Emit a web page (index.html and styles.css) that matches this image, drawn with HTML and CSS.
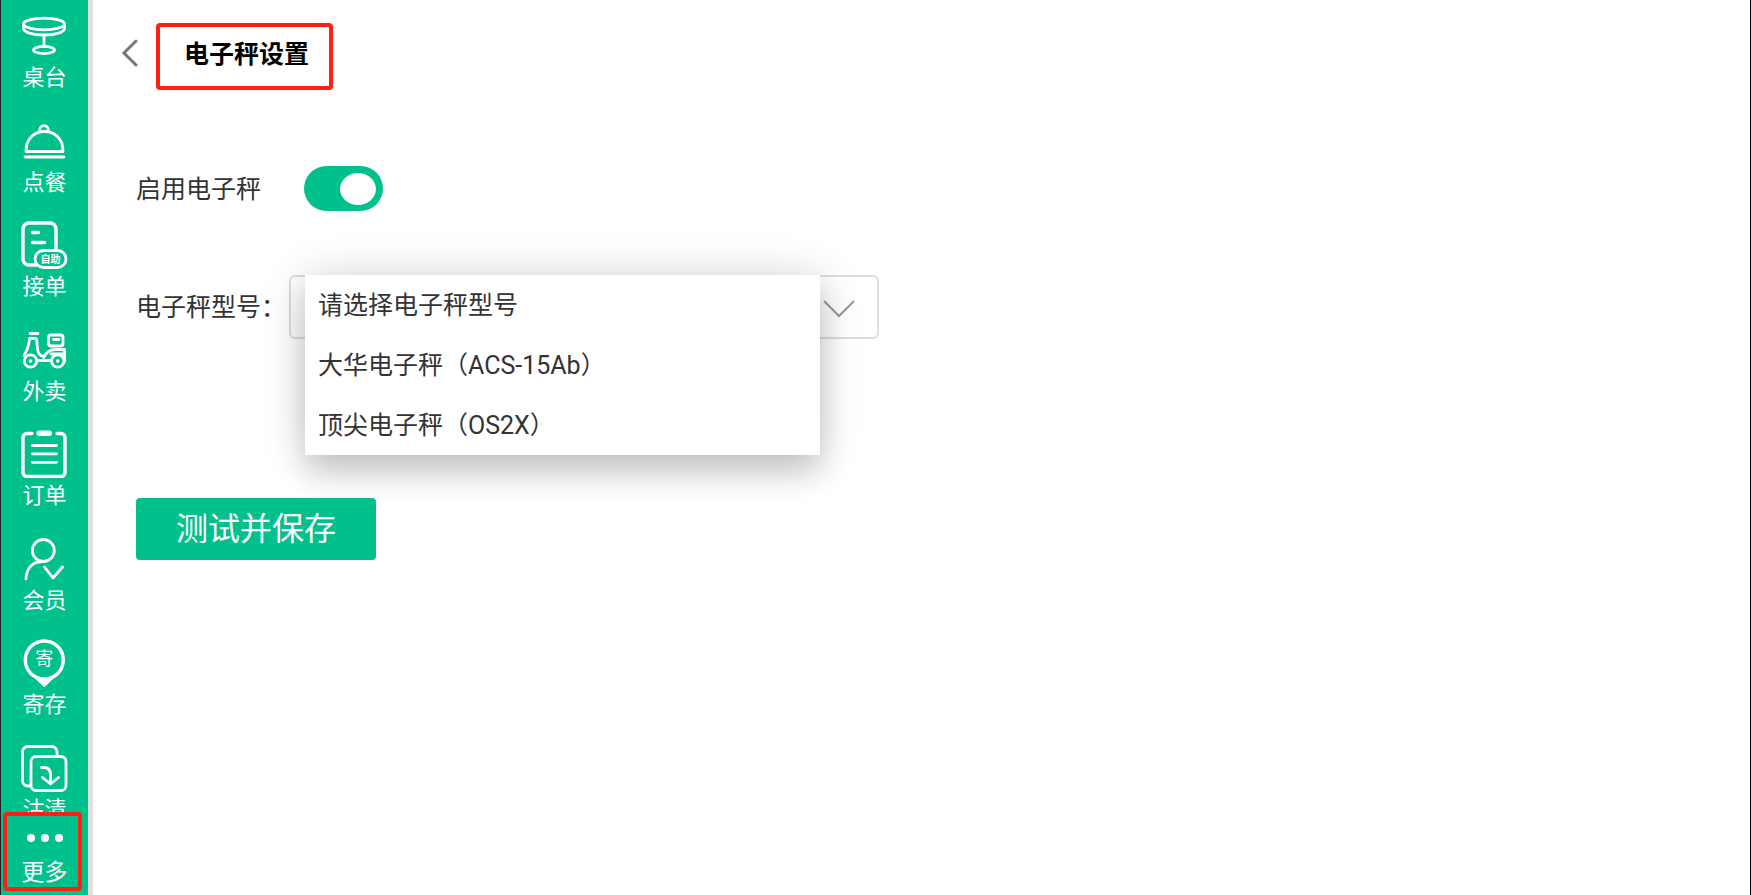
FILE: index.html
```
<!DOCTYPE html>
<html lang="zh-CN">
<head>
    <meta charset="UTF-8">
    <meta name="viewport" content="width=device-width, initial-scale=1.0">
    <title>电子秤设置</title>
    <link rel="stylesheet" href="styles.css">
</head>
<body>
    <div class="app">
        <nav class="sidebar">
            <div class="nav-scroll">
                <div class="nav-list">
                    <a class="nav-item" href="#table">
                        <svg class="nav-icon" viewBox="0 0 48 48">
                            <ellipse cx="24" cy="12" rx="20.5" ry="5.8"/>
                            <path d="M3.500 12v4.500c0 3.500 9 6.500 20.500 6.500s20.500-3 20.500-6.500V12M24 23v11.500"/>
                            <ellipse cx="24" cy="38" rx="10.500" ry="3.600"/>
                        </svg>
                        <span>桌台</span>
                    </a>
                    <a class="nav-item" href="#dishes">
                        <svg class="nav-icon" viewBox="0 0 48 48">
                            <path d="M20 14.500a4.300 4.300 0 1 1 8 0M6 34.500C6 22 14 14.500 24.500 14.500S43 22 43 34.500zM5 40h39"/>
                        </svg>
                        <span>点餐</span>
                    </a>
                    <a class="nav-item" href="#accept">
                        <svg class="nav-icon" viewBox="0 0 48 48">
                            <path class="thick" d="M36 28V8a6 6 0 0 0-6-6H9a6 6 0 0 0-6 6v30a6 6 0 0 0 6 6h7"/>
                            <path class="thick" d="M12.500 11.500h6M12.500 21.500h12"/>
                            <rect x="15" y="29.500" width="31" height="17" rx="8.500"/>
                            <text class="icon-text" x="30.500" y="42" font-size="10">自助</text>
                        </svg>
                        <span>接单</span>
                    </a>
                    <a class="nav-item" href="#takeout">
                        <svg class="nav-icon" viewBox="0 0 48 48">
                            <path d="M10 7.500h8M9.500 12.500h5.500q1.500 0 1.700 2l.8 8c.3 4 2 7.500 6.500 8M9.500 12.500C9 20 7.500 24 4 29.500M17.500 34.500h13.500M23.500 31.500c2.500-5 6-8 12-8h9v12.500"/>
                            <path d="M31 28h13"/>
                            <rect x="28.500" y="9" width="14.500" height="11" rx="2.500"/>
                            <path d="M33.500 13.500h5.500"/>
                            <circle cx="10.500" cy="35" r="6.200"/>
                            <circle cx="37.700" cy="35" r="6.200"/>
                            <circle class="solid" cx="10.500" cy="35" r="1.800"/>
                            <circle class="solid" cx="37.700" cy="35" r="1.800"/>
                        </svg>
                        <span>外卖</span>
                    </a>
                    <a class="nav-item" href="#orders">
                        <svg class="nav-icon" viewBox="0 0 48 48">
                            <path class="thick" d="M12 3.500H7a4 4 0 0 0-4 4v35a4 4 0 0 0 4 4h34a4 4 0 0 0 4-4v-35a4 4 0 0 0-4-4h-4"/>
                            <rect class="solid" x="16.500" y=".5" width="15.500" height="5.500" rx="2.700"/>
                            <path d="M12.500 15.500h24M12.500 23.800h24M12.500 32.300h24"/>
                        </svg>
                        <span>订单</span>
                    </a>
                    <a class="nav-item" href="#members">
                        <svg class="nav-icon" viewBox="0 0 48 48">
                            <circle cx="23.300" cy="15.500" r="11"/>
                            <path d="M6 44C6.500 33.500 12 27 22 26.500M24.500 32L33 43l9.500-11"/>
                        </svg>
                        <span>会员</span>
                    </a>
                    <a class="nav-item" href="#deposit">
                        <svg class="nav-icon" viewBox="0 0 48 48">
                            <circle class="thick" cx="24.300" cy="21" r="19"/>
                            <path class="solid" d="M8.500 33Q24.300 44 40 33L24.300 48.500z"/>
                            <text class="icon-text regular" x="24.300" y="26" font-size="18">寄</text>
                        </svg>
                        <span>寄存</span>
                    </a>
                    <a class="nav-item" href="#soldout">
                        <svg class="nav-icon" viewBox="0 0 48 48">
                            <path d="M10.500 42H8a5.500 5.500 0 0 1-5.500-5.500V8A5.500 5.500 0 0 1 8 2.500h23.500A5.500 5.500 0 0 1 37 8v4.500"/>
                            <rect x="11" y="12.500" width="35" height="34" rx="5"/>
                            <path d="M21.500 23.500h2q7 0 7 7V40M22.500 33.500l8 6.500 8-6.500"/>
                        </svg>
                        <span>沽清</span>
                    </a>
                </div>
            </div>
            <a class="nav-more" href="#more">
                <svg class="more-icon" viewBox="0 0 38 10">
                    <circle cx="5" cy="5" r="4"/>
                    <circle cx="19" cy="5" r="4"/>
                    <circle cx="33" cy="5" r="4"/>
                </svg>
                <span>更多</span>
            </a>
        </nav>

        <main class="content">
            <header class="page-header">
                <button class="back-btn" type="button" aria-label="返回">
                    <svg viewBox="0 0 18 30"><path d="M15 3L3 15l12 12"/></svg>
                </button>
                <h1 class="page-title">电子秤设置</h1>
            </header>

            <form class="settings">
                <div class="row">
                    <label for="enableScale">启用电子秤</label>
                    <input class="switch" type="checkbox" id="enableScale" checked>
                </div>

                <div class="row row-model">
                    <label for="scaleModel">电子秤型号：</label>
                    <div class="select-box">
                        <select id="scaleModel">
                            <option>请选择电子秤型号</option>
                            <option>大华电子秤（ACS-15Ab）</option>
                            <option>顶尖电子秤（OS2X）</option>
                        </select>
                        <svg class="arrow" viewBox="0 0 32 18"><path d="M1 1l15 15L31 1"/></svg>
                        <div class="menu">
                            <button class="menu-item" type="button">请选择电子秤型号</button>
                            <button class="menu-item" type="button">大华电子秤（ACS-15Ab）</button>
                            <button class="menu-item" type="button">顶尖电子秤（OS2X）</button>
                        </div>
                    </div>
                </div>

                <button class="save-btn" type="submit">测试并保存</button>
            </form>
        </main>
    </div>
</body>
</html>
```
FILE: styles.css
```
* {
    box-sizing: border-box;
}

body {
    margin: 0;
    font-family: Roboto, "Noto Sans CJK SC", sans-serif;
    font-size: 25px;
    color: #333;
    background: #fff;
}

button,
select {
    font: inherit;
    color: inherit;
}

.app {
    display: flex;
    height: 100vh;
    border-left: 1px solid #222;
    border-right: 1px solid #000018;
}

/* 左侧导航 */
.sidebar {
    display: flex;
    flex-direction: column;
    flex: none;
    width: 92px;
    background: #00c18c;
    border-right: 5px solid #e0e0e0;
}

.nav-scroll {
    flex: 1;
    min-height: 0;
    overflow: hidden;
}

.nav-list {
    display: grid;
    grid-auto-rows: 1fr;
    min-height: 836px;
}

.nav-item {
    display: flex;
    flex-direction: column;
    align-items: center;
    gap: 4px;
    padding-top: 12px;
    font-size: 22px;
    line-height: 28px;
    color: #fff;
    text-decoration: none;
}

.nav-icon {
    width: 48px;
    height: 48px;
    margin-right: 2px;
    fill: none;
    stroke: #fff;
    stroke-width: 2.8;
    stroke-linecap: round;
    stroke-linejoin: round;
}

.nav-icon .thick {
    stroke-width: 3.4;
}

.nav-icon .solid {
    fill: #fff;
    stroke: none;
}

.icon-text {
    fill: #fff;
    stroke: none;
    font-weight: bold;
    text-anchor: middle;
}

.icon-text.regular {
    font-weight: normal;
}

.nav-more {
    display: flex;
    flex-direction: column;
    align-items: center;
    gap: 16px;
    width: 79px;
    height: 79px;
    margin: 0 0 4px 2px;
    padding-top: 17px;
    border: 4px solid #ff2012;
    border-radius: 4px;
    font-size: 23px;
    line-height: 28px;
    color: #fff;
    text-decoration: none;
}

.more-icon {
    flex: none;
    width: 38px;
    height: 10px;
    fill: #fff;
}

.nav-more .more-icon,
.nav-more span {
    margin-left: 4px;
}

/* 右侧内容 */
.content {
    flex: 1;
    min-width: 0;
    padding-top: 23px;
}

.page-header {
    display: flex;
    align-items: flex-start;
    gap: 17px;
    padding: 0 28px;
}

.back-btn {
    width: 18px;
    height: 30px;
    margin-top: 15px;
    padding: 0;
    border: none;
    background: none;
    cursor: pointer;
}

.back-btn svg {
    display: block;
    fill: none;
    stroke: #777;
    stroke-width: 3;
    stroke-linecap: round;
}

.page-title {
    margin: 0;
    padding: 13px 20px 16px 24px;
    border: 4px solid #ff2012;
    border-radius: 4px;
    font-size: 25px;
    line-height: 30px;
    font-weight: bold;
    color: #000;
}

.settings {
    padding: 76px 43px 0;
}

.row {
    display: flex;
    align-items: center;
    min-height: 45px;
}

.row label {
    padding-bottom: 4px;
}

.row-model {
    margin-top: 64px;
}

.switch {
    appearance: none;
    display: flex;
    align-items: center;
    width: 79px;
    height: 45px;
    margin: 0 0 0 43px;
    padding: 0 7px;
    border-radius: 23px;
    background: #ccc;
    cursor: pointer;
}

.switch::before {
    content: "";
    width: 36px;
    height: 32px;
    border-radius: 50%;
    background: #fff;
}

.switch:checked {
    justify-content: flex-end;
    background: #00c18c;
}

.select-box {
    position: relative;
    flex: 1;
    max-width: 590px;
    margin-left: 3px;
}

.select-box select {
    appearance: none;
    display: block;
    width: 100%;
    height: 64px;
    padding: 0 64px 0 28px;
    border: 2px solid #ddd;
    border-radius: 6px;
    background: #fff;
}

.arrow {
    position: absolute;
    top: 25px;
    right: 24px;
    width: 32px;
    height: 18px;
    fill: none;
    stroke: #999;
    stroke-width: 2;
    pointer-events: none;
}

.menu {
    position: absolute;
    top: 0;
    left: 16px;
    right: 59px;
    background: #fff;
    box-shadow: 0 20px 28px rgba(0, 0, 0, 0.14), 0 2px 40px rgba(0, 0, 0, 0.18);
}

.menu-item {
    display: block;
    width: 100%;
    height: 60px;
    padding: 0 13px 4px;
    border: none;
    background: none;
    text-align: left;
    cursor: pointer;
}

.save-btn {
    display: block;
    height: 62px;
    margin-top: 159px;
    padding: 0 40px;
    border: none;
    border-radius: 4px;
    background: #00c18c;
    font-size: 32px;
    line-height: 62px;
    color: #fff;
    cursor: pointer;
}
```
